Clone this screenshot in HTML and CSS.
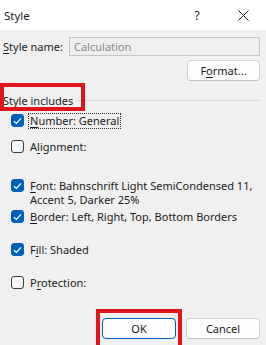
FILE: index.html
```html
<!DOCTYPE html>
<html lang="en">
<head>
    <meta charset="UTF-8">
    <title>Style</title>
    <link rel="stylesheet" href="styles.css">
</head>
<body>
    <div class="dialog">
        <div class="titlebar">
            <span class="title">Style</span>
            <span class="tb-btn help">?</span>
            <span class="tb-btn close">
                <svg width="11" height="11" viewBox="0 0 11 11">
                    <path d="M0.5 0.5 L10.5 10.5 M10.5 0.5 L0.5 10.5" stroke="#1a1a1a" stroke-width="1" fill="none"/>
                </svg>
            </span>
        </div>

        <div class="content">
            <div class="name-row">
                <label class="name-label"><u>S</u>tyle name:</label>
                <div class="name-input">Calculation</div>
            </div>
            <div class="format-row">
                <button class="btn format-btn">F<u>o</u>rmat...</button>
            </div>

            <div class="section-head">
                <span class="section-title">Style includes</span>
                <span class="section-line"></span>
                <span class="mark mark-head"></span>
            </div>

            <div class="opt opt-number">
                <span class="box checked">
                    <svg width="9" height="8" viewBox="0 0 9 8"><path d="M1 4.2 L3.4 6.4 L8 1.4" stroke="#fff" stroke-width="1.3" fill="none"/></svg>
                </span>
                <span class="opt-label focus"><u>N</u>umber: General</span>
            </div>
            <div class="opt opt-align">
                <span class="box"></span>
                <span class="opt-label">A<u>l</u>ignment:</span>
            </div>
            <div class="opt opt-font">
                <span class="box checked">
                    <svg width="9" height="8" viewBox="0 0 9 8"><path d="M1 4.2 L3.4 6.4 L8 1.4" stroke="#fff" stroke-width="1.3" fill="none"/></svg>
                </span>
                <span class="opt-label"><u>F</u>ont: Bahnschrift Light SemiCondensed 11,<br>Accent 5, Darker 25%</span>
            </div>
            <div class="opt opt-border">
                <span class="box checked">
                    <svg width="9" height="8" viewBox="0 0 9 8"><path d="M1 4.2 L3.4 6.4 L8 1.4" stroke="#fff" stroke-width="1.3" fill="none"/></svg>
                </span>
                <span class="opt-label"><u>B</u>order: Left, Right, Top, Bottom Borders</span>
            </div>
            <div class="opt opt-fill">
                <span class="box checked">
                    <svg width="9" height="8" viewBox="0 0 9 8"><path d="M1 4.2 L3.4 6.4 L8 1.4" stroke="#fff" stroke-width="1.3" fill="none"/></svg>
                </span>
                <span class="opt-label">F<u>i</u>ll: Shaded</span>
            </div>
            <div class="opt opt-protect">
                <span class="box"></span>
                <span class="opt-label">P<u>r</u>otection:</span>
            </div>

            <div class="footer">
                <div class="ok-wrap">
                    <button class="btn ok-btn">OK</button>
                    <span class="mark mark-ok"></span>
                </div>
                <button class="btn cancel-btn">Cancel</button>
            </div>
        </div>
    </div>
</body>
</html>
```

FILE: styles.css
```css
:root {
    --bg: #f0f0f0;
    --text: #1a1a1a;
    --muted: #8a8a8a;
    --blue: #005fb8;
    --red: #e0141a;
}
body {
    margin: 0;
    background: var(--bg);
    font-family: "Noto Sans", "Open Sans", sans-serif;
    font-size: 11px;
    color: var(--text);
    width: 266px;
    height: 345px;
    overflow: hidden;
}
u {
    text-decoration: underline;
    text-underline-offset: 2px;
}
.titlebar {
    height: 30px;
    background: #ffffff;
    display: flex;
    align-items: center;
}
.title {
    flex: 1;
    padding-left: 4px;
    font-size: 11.5px;
}
.tb-btn {
    width: 46px;
    height: 30px;
    display: flex;
    align-items: center;
    justify-content: center;
}
.help {
    font-size: 12px;
}
.content {
    padding: 7px 6px 0 3px;
}
.name-row {
    display: flex;
    align-items: center;
    height: 19px;
}
.name-label {
    width: 66px;
}
.name-input {
    flex: 1;
    height: 17px;
    border: 1px solid #c4c4c4;
    background: #efefef;
    color: var(--muted);
    padding-left: 4px;
    line-height: 17px;
}
.format-row {
    display: flex;
    justify-content: flex-end;
    margin-top: 4px;
}
.btn {
    font-family: inherit;
    font-size: 11px;
    color: var(--text);
    background: #fdfdfd;
    border: 1px solid #d0d0d0;
    border-bottom-color: #bdbdbd;
    border-radius: 4px;
    height: 21px;
    padding: 0;
}
.format-btn {
    width: 73px;
}
.section-head {
    position: relative;
    display: flex;
    align-items: center;
    height: 14px;
    margin-top: 12px;
}
.section-title {
    white-space: nowrap;
}
.section-line {
    flex: 1;
    height: 1px;
    background: #dadada;
    margin-left: 4px;
}
.mark {
    position: absolute;
    border: 4px solid var(--red);
    pointer-events: none;
}
.mark-head {
    left: -3px;
    top: -10px;
    width: 77px;
    height: 20px;
}
.opt {
    display: flex;
    align-items: flex-start;
    padding-left: 8px;
    line-height: 14px;
}
.box {
    width: 13px;
    height: 13px;
    box-sizing: border-box;
    border: 1px solid #3c3c3c;
    border-radius: 3px;
    margin-top: 1px;
    margin-right: 4px;
    display: flex;
    align-items: center;
    justify-content: center;
    flex-shrink: 0;
    background: #f7f7f7;
}
.box.checked {
    background: var(--blue);
    border-color: var(--blue);
}
.opt-label {
    padding: 0 1px;
    border: 1px dotted transparent;
    white-space: nowrap;
}
.focus {
    border-color: #333;
}
.opt-number {
    margin-top: 6px;
}
.opt-align {
    margin-top: 10px;
}
.opt-font {
    margin-top: 23px;
}
.opt-border {
    margin-top: 1px;
}
.opt-fill {
    margin-top: 17px;
}
.opt-protect {
    margin-top: 17px;
}
.footer {
    display: flex;
    justify-content: flex-end;
    gap: 10px;
    margin-top: 27px;
}
.ok-wrap {
    position: relative;
}
.ok-btn {
    width: 74px;
    border: 1px solid var(--blue);
}
.cancel-btn {
    width: 74px;
}
.mark-ok {
    left: -6px;
    top: -9px;
    width: 78px;
    height: 40px;
}
```
